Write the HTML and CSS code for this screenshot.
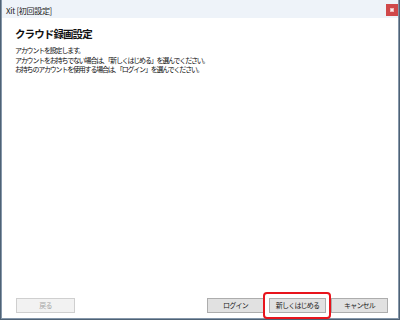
FILE: index.html
```html
<!DOCTYPE html>
<html lang="ja">
<head>
<meta charset="utf-8">
<link rel="stylesheet" href="styles.css">
</head>
<body>
<div class="window">
  <div class="titlebar">
    <span class="title">Xit [初回設定]</span>
    <span class="close"><span class="close-icon"></span></span>
  </div>
  <div class="content">
    <h1 class="heading">クラウド録画設定</h1>
    <p class="desc">アカウントを設定します。<br>アカウントをお持ちでない場合は、「新しくはじめる」を選んでください。<br>お持ちのアカウントを使用する場合は、「ログイン」を選んでください。</p>
  </div>
  <div class="footer">
    <button class="btn disabled">戻る</button>
    <div class="spacer"></div>
    <div class="group">
      <button class="btn">ログイン</button>
      <button class="btn highlighted">新しくはじめる</button>
      <button class="btn">キャンセル</button>
    </div>
  </div>
</div>
</body>
</html>
```
FILE: styles.css
```css
* { box-sizing: border-box; }
html, body {
  margin: 0;
  padding: 0;
  width: 400px;
  height: 320px;
  overflow: hidden;
  background: #4f6275;
  font-family: "Noto Sans CJK JP", "Noto Sans", sans-serif;
}
.window {
  width: 398px;
  height: 319px;
  margin-left: 1px;
  background: #ffffff;
  border: 1px solid #8597aa;
  border-top: none;
  display: flex;
  flex-direction: column;
}
.titlebar {
  height: 18px;
  background: #eef3f9;
  display: flex;
  align-items: center;
  padding-left: 4px;
  flex-shrink: 0;
}
.title {
  font-size: 8px;
  color: #1a1a1a;
  letter-spacing: -0.3px;
  flex: 1;
  padding-top: 2px;
}
.close {
  width: 12px;
  height: 12px;
  background: #d0484a;
  display: flex;
  align-items: center;
  justify-content: center;
  margin-top: 2px;
}
.close-icon {
  width: 4px;
  height: 4px;
  background: #fbeaea;
  border: 1px solid #f0b8b8;
}
.content {
  padding: 9px 13px 0 13px;
}
.heading {
  margin: 0;
  font-size: 10.5px;
  line-height: 14px;
  font-weight: bold;
  letter-spacing: -0.9px;
  color: #111;
}
.desc {
  margin: 5px 0 0 0;
  font-size: 7px;
  line-height: 9.7px;
  letter-spacing: -1.2px;
  color: #111;
}
.footer {
  margin-top: auto;
  display: flex;
  align-items: center;
  padding: 0 10px 5px 14px;
}
.spacer { flex: 1; }
.group {
  display: flex;
  gap: 5px;
}
.btn {
  position: relative;
  width: 57px;
  height: 15px;
  padding: 0;
  margin: 0;
  font-family: "Noto Sans CJK JP", sans-serif;
  font-size: 7px;
  letter-spacing: -0.8px;
  color: #222;
  background: #e1e1e1;
  border: 1px solid #adadad;
  border-radius: 0;
  line-height: 13px;
}
.btn.disabled {
  width: 59px;
  background: #f2f2f2;
  border-color: #cfcfcf;
  color: #a6a6a6;
}
.btn.highlighted::after {
  content: "";
  position: absolute;
  left: -7px;
  right: -6px;
  top: -7px;
  bottom: -7px;
  border: 2.5px solid #e8141c;
  border-radius: 4px;
}
```
